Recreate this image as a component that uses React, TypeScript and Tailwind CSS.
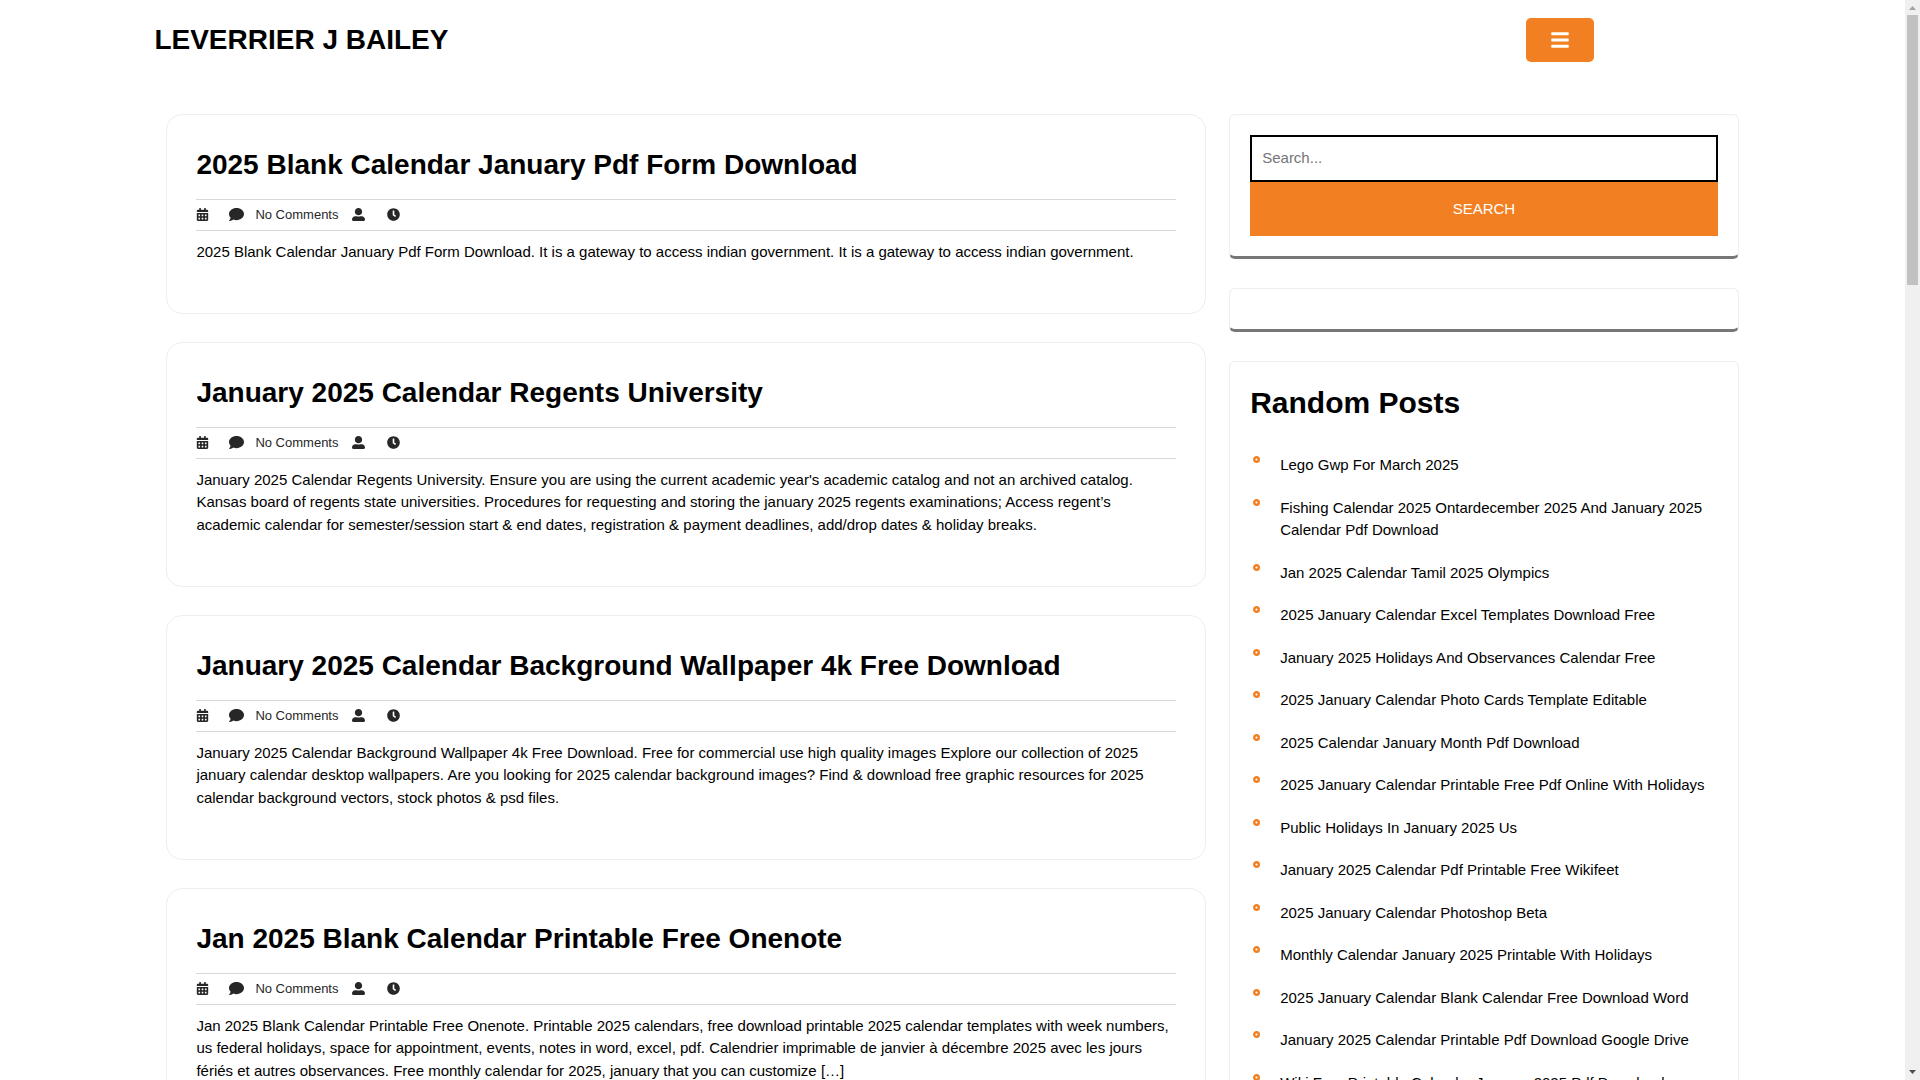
import { FaBars, FaCalendarAlt, FaClock, FaComment, FaUserAlt } from "react-icons/fa";

const posts = [
  {
    title: "2025 Blank Calendar January Pdf Form Download",
    excerpt:
      "2025 Blank Calendar January Pdf Form Download. It is a gateway to access indian government. It is a gateway to access indian government.",
  },
  {
    title: "January 2025 Calendar Regents University",
    excerpt:
      "January 2025 Calendar Regents University. Ensure you are using the current academic year's academic catalog and not an archived catalog. Kansas board of regents state universities. Procedures for requesting and storing the january 2025 regents examinations; Access regent’s academic calendar for semester/session start & end dates, registration & payment deadlines, add/drop dates & holiday breaks.",
  },
  {
    title: "January 2025 Calendar Background Wallpaper 4k Free Download",
    excerpt:
      "January 2025 Calendar Background Wallpaper 4k Free Download. Free for commercial use high quality images Explore our collection of 2025 january calendar desktop wallpapers. Are you looking for 2025 calendar background images? Find & download free graphic resources for 2025 calendar background vectors, stock photos & psd files.",
  },
  {
    title: "Jan 2025 Blank Calendar Printable Free Onenote",
    excerpt:
      "Jan 2025 Blank Calendar Printable Free Onenote. Printable 2025 calendars, free download printable 2025 calendar templates with week numbers, us federal holidays, space for appointment, events, notes in word, excel, pdf. Calendrier imprimable de janvier à décembre 2025 avec les jours fériés et autres observances. Free monthly calendar for 2025, january that you can customize […]",
  },
];

const randomPosts = [
  "Lego Gwp For March 2025",
  "Fishing Calendar 2025 Ontardecember 2025 And January 2025 Calendar Pdf Download",
  "Jan 2025 Calendar Tamil 2025 Olympics",
  "2025 January Calendar Excel Templates Download Free",
  "January 2025 Holidays And Observances Calendar Free",
  "2025 January Calendar Photo Cards Template Editable",
  "2025 Calendar January Month Pdf Download",
  "2025 January Calendar Printable Free Pdf Online With Holidays",
  "Public Holidays In January 2025 Us",
  "January 2025 Calendar Pdf Printable Free Wikifeet",
  "2025 January Calendar Photoshop Beta",
  "Monthly Calendar January 2025 Printable With Holidays",
  "2025 January Calendar Blank Calendar Free Download Word",
  "January 2025 Calendar Printable Pdf Download Google Drive",
  "Wiki Free Printable Calendar January 2025 Pdf Download",
];

type PostCardProps = {
  title: string;
  excerpt: string;
};

function PostCard({ title, excerpt }: PostCardProps) {
  return (
    <article className="rounded-2xl border border-[#eeeeee] px-[29px] pt-[33px] pb-[50px]">
      <h2 className="text-[28px] leading-[34px] font-bold">
        <a href="#">{title}</a>
      </h2>
      <div className="mt-[17px] flex items-center border-y border-[#d8d8d8] py-[5px] text-[13px] text-[#272727]">
        <FaCalendarAlt className="mr-5" />
        <FaComment className="mr-[11px] h-[15px] w-[15px]" />
        <a href="#">No Comments</a>
        <FaUserAlt className="mr-[22px] ml-[14px]" />
        <FaClock />
      </div>
      <p className="mt-[10px]">{excerpt}</p>
    </article>
  );
}

function Widget({ children }: { children?: React.ReactNode }) {
  return (
    <section className="rounded-md border border-b-[3px] border-[#eeeeee] border-b-[#777777] p-5">
      {children}
    </section>
  );
}

function Bullet() {
  return (
    <svg className="mt-0.5 mr-5 ml-[3px] h-[7px] w-[7px] shrink-0" viewBox="0 0 7 7" aria-hidden="true">
      <circle cx="3.5" cy="3.5" r="2.3" fill="none" stroke="#f27f22" strokeWidth="2.4" />
    </svg>
  );
}

function Scrollbar() {
  return (
    <div className="flex w-[15px] shrink-0 flex-col items-center bg-[#f0f0f0]" aria-hidden="true">
      <svg className="h-[15px] w-[15px] shrink-0" viewBox="0 0 15 15">
        <path d="M4 10h7L7.500 6z" fill="#a3a3a3" />
      </svg>
      <div className="h-1/4 w-[11px] bg-[#c1c1c1]" />
      <svg className="mt-auto h-[15px] w-[15px] shrink-0" viewBox="0 0 15 15">
        <path d="M4 5h7L7.500 9z" fill="#505050" />
      </svg>
    </div>
  );
}

export default function App() {
  return (
    <div className="flex h-screen overflow-hidden bg-white font-['Liberation_Sans',Arial,sans-serif] text-[15px] leading-normal text-black">
      <div className="min-w-0 flex-1 overflow-hidden">
        <header className="flex items-center justify-between px-[8%] py-[18px]">
          <p className="pl-0.5 text-[28px] leading-[42px] font-bold uppercase">
            <a href="#">Leverrier J Bailey</a>
          </p>
          {/* Menu toggle */}
          <button
            type="button"
            aria-label="Open menu"
            className="mr-[159px] flex h-11 w-[68px] items-center justify-center rounded-[5px] bg-[#f27f22] text-xl text-white"
          >
            <FaBars />
          </button>
        </header>

        <div className="px-[8%] pt-[34px]">
          <div className="grid grid-cols-[1041fr_510fr] items-start gap-[23px] px-[14px]">
            <main className="flex flex-col gap-7">
              {posts.map((post) => (
                <PostCard key={post.title} title={post.title} excerpt={post.excerpt} />
              ))}
            </main>

            <aside className="flex flex-col gap-[29px]">
              <Widget>
                <form role="search">
                  <input
                    type="search"
                    aria-label="Search"
                    placeholder="Search..."
                    className="block h-[47px] w-full border-2 border-black px-[10px] pb-0.5 placeholder:text-[#757575]"
                  />
                  <button type="submit" className="block h-[54px] w-full bg-[#f27f22] text-white uppercase">
                    Search
                  </button>
                </form>
              </Widget>

              <Widget />

              <Widget>
                <h2 className="text-[30px] leading-[42px] font-bold">Random Posts</h2>
                <ul className="mt-[30px]">
                  {randomPosts.map((title) => (
                    <li key={title} className="mb-5 flex items-start">
                      <Bullet />
                      <a href="#">{title}</a>
                    </li>
                  ))}
                </ul>
              </Widget>
            </aside>
          </div>
        </div>
      </div>
      <Scrollbar />
    </div>
  );
}
